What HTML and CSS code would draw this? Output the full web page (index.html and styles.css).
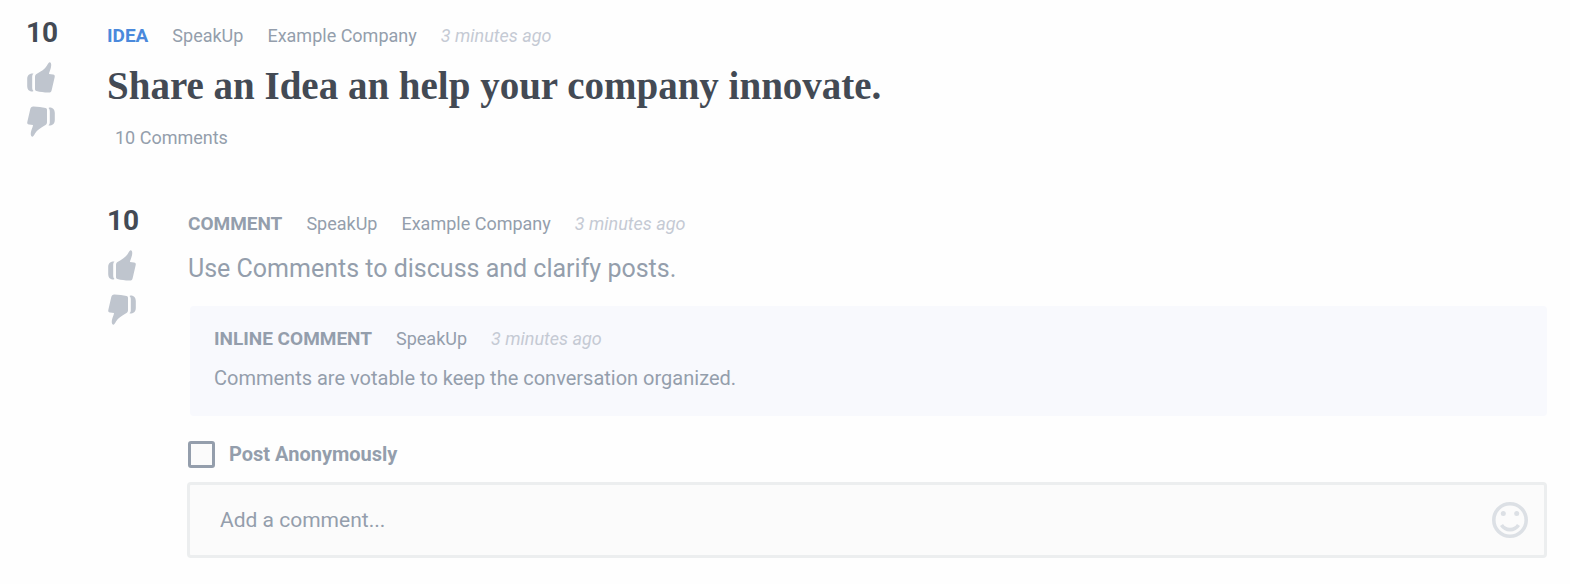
FILE: index.html
```
<!DOCTYPE html>
<html lang="en">
<head>
    <meta charset="UTF-8">
    <meta name="viewport" content="width=device-width, initial-scale=1.0">
    <title>SpeakUp</title>
    <link rel="stylesheet" href="styles.css">
</head>
<body>
    <!-- Shared thumb shape -->
    <svg class="sprite" aria-hidden="true">
        <symbol id="thumb" viewBox="0 0 28 31">
            <path d="M8 15C8 13.500 8.500 12.600 9.500 12C14 9.500 18 7 20 3.500C21 1.500 22 0 23 0.300C24.500 1 24.500 3.500 23.800 6C23.200 8.500 22 10.500 22 12L26 12.500C27.500 12.800 28 13.500 27.700 15L24.700 28C24.300 29.800 23.500 30.700 21.500 30.600C17 30.400 13 30 9.500 29C8.400 28.700 8 28 8 27Z"/>
            <path d="M6 11.500C2.500 11.500 0.300 13 0.200 17L0.200 24C0.300 27 1.500 29.500 5.500 29.500L6.500 29C5.500 28 5.200 27 5.200 25.500L5.200 15C5.200 13.500 5.500 12.500 6.500 11.800Z"/>
        </symbol>
    </svg>

    <main class="thread">
        <!-- Post -->
        <article class="entry">
            <div class="votes">
                <span class="score">10</span>
                <button class="vote-btn" type="button" aria-label="Vote up"><svg class="thumb"><use href="#thumb"/></svg></button>
                <button class="vote-btn" type="button" aria-label="Vote down"><svg class="thumb down"><use href="#thumb"/></svg></button>
            </div>
            <div class="content">
                <div class="meta">
                    <span class="label idea">IDEA</span>
                    <a href="#">SpeakUp</a>
                    <a href="#">Example Company</a>
                    <time>3 minutes ago</time>
                </div>
                <h1>Share an Idea an help your company innovate.</h1>
                <a class="comment-count" href="#comments">10 Comments</a>
            </div>
        </article>

        <!-- Comments -->
        <section class="replies" id="comments">
            <article class="entry">
                <div class="votes">
                    <span class="score">10</span>
                    <button class="vote-btn" type="button" aria-label="Vote up"><svg class="thumb"><use href="#thumb"/></svg></button>
                    <button class="vote-btn" type="button" aria-label="Vote down"><svg class="thumb down"><use href="#thumb"/></svg></button>
                </div>
                <div class="content">
                    <div class="meta">
                        <span class="label">COMMENT</span>
                        <a href="#">SpeakUp</a>
                        <a href="#">Example Company</a>
                        <time>3 minutes ago</time>
                    </div>
                    <p class="comment-text">Use Comments to discuss and clarify posts.</p>

                    <div class="inline-comment">
                        <div class="meta">
                            <span class="label">INLINE COMMENT</span>
                            <a href="#">SpeakUp</a>
                            <time>3 minutes ago</time>
                        </div>
                        <p>Comments are votable to keep the conversation organized.</p>
                    </div>

                    <form class="comment-form">
                        <label class="anonymous">
                            <input type="checkbox" name="anonymous">
                            Post Anonymously
                        </label>
                        <div class="comment-field">
                            <input type="text" name="comment" placeholder="Add a comment..." aria-label="Add a comment">
                            <button class="emoji-btn" type="button" aria-label="Add emoji">
                                <svg viewBox="0 0 36 36">
                                    <circle class="line" cx="18" cy="18" r="16.200"/>
                                    <circle cx="11.300" cy="11.500" r="2.500"/>
                                    <circle cx="24.700" cy="11.500" r="2.500"/>
                                    <path class="line" d="M9.500 23C13.500 29.200 22.500 29.200 26.500 23"/>
                                </svg>
                            </button>
                        </div>
                    </form>
                </div>
            </article>
        </section>
    </main>
</body>
</html>
```
FILE: styles.css
```
* {
    box-sizing: border-box;
}

body {
    margin: 0;
    font-family: Roboto, "Liberation Sans", sans-serif;
    font-size: 18px;
    color: #949eac;
    background-color: #fefefe;
}

a {
    color: inherit;
    text-decoration: none;
}

button {
    padding: 0;
    border: none;
    background: none;
    cursor: pointer;
}

.sprite {
    display: none;
}

.thread {
    padding: 16px 23px 24px 26px;
}

.entry {
    display: flex;
}

/* Votes */
.votes {
    display: flex;
    flex-direction: column;
    align-items: flex-start;
    flex: none;
    width: 81px;
    gap: 10px;
}

.score {
    font-size: 28px;
    line-height: 34px;
    font-weight: bold;
    color: #434a54;
}

.vote-btn {
    height: 34px;
    margin-left: 1px;
}

.thumb {
    display: block;
    width: 28px;
    height: 31px;
    fill: #bfc5ce;
}

.thumb.down {
    transform: rotate(180deg);
}

/* Content */
.content {
    flex: 1;
    min-width: 0;
}

.meta {
    display: flex;
    gap: 24px;
    line-height: 24px;
    padding-top: 8px;
}

.label {
    font-size: 19px;
    font-weight: bold;
}

.idea {
    color: #4a89dc;
}

time {
    font-style: italic;
    color: #c5cad4;
}

h1 {
    margin: 14px 0 12px;
    font-family: "Liberation Serif", serif;
    font-size: 39px;
    line-height: 48px;
    color: #434a54;
}

.comment-count {
    display: block;
    margin-left: 8px;
    line-height: 32px;
}

.replies {
    margin: 50px 0 0 81px;
}

.comment-text {
    margin: 17px 0 21px;
    font-size: 25px;
    line-height: 32px;
}

.inline-comment {
    margin-left: 2px;
    padding: 13px 24px 24px;
    border-radius: 4px;
    background-color: #f8f9fd;
}

.inline-comment p {
    margin: 13px 0 0;
    font-size: 20px;
    line-height: 28px;
}

/* Form */
.comment-form {
    margin-top: 24px;
}

.anonymous {
    display: flex;
    align-items: center;
    gap: 14px;
    height: 28px;
    font-size: 20px;
    font-weight: bold;
}

.anonymous input {
    appearance: none;
    width: 27px;
    height: 27px;
    margin: 0;
    border: 3px solid #949eac;
    border-radius: 3px;
    background-color: #fbfbfb;
}

.anonymous input:checked {
    background-color: #949eac;
}

.comment-field {
    display: flex;
    align-items: center;
    height: 76px;
    margin: 14px 0 0 -1px;
    padding: 0 16px 0 30px;
    border: 3px solid #eceeef;
    border-radius: 4px;
    background-color: #fbfbfb;
}

.comment-field input {
    flex: 1;
    min-width: 0;
    height: 100%;
    padding: 0;
    border: none;
    outline: none;
    background: none;
    font-family: inherit;
    font-size: 21px;
    color: #434a54;
}

.comment-field input::placeholder {
    color: #949eac;
    opacity: 1;
}

.emoji-btn svg {
    display: block;
    width: 36px;
    height: 36px;
    fill: #dce0e5;
}

.emoji-btn .line {
    fill: none;
    stroke: #dce0e5;
    stroke-width: 3.6;
}
```
